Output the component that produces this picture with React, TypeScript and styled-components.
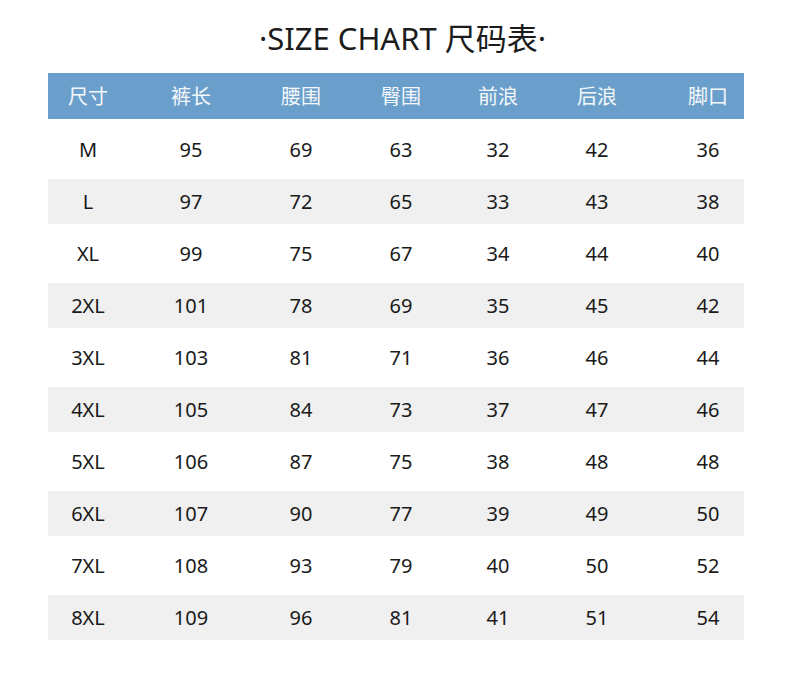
import React from 'react';
import styled, { createGlobalStyle } from 'styled-components';

const GlobalStyle = createGlobalStyle`
  body {
    margin: 0;
    background: #ffffff;
    font-family: "Noto Sans", "Noto Sans CJK SC", sans-serif;
  }
`;

const Page = styled.div`
  width: 790px;
  height: 676px;
  background: #ffffff;
  padding: 0 46px 0 48px;
  box-sizing: border-box;
`;

const Title = styled.h1`
  margin: 0;
  height: 73px;
  display: flex;
  align-items: center;
  justify-content: center;
  padding-left: 13px;
  font-size: 31px;
  font-weight: 400;
  color: #1c1c1c;
`;

const Table = styled.div`
  display: flex;
  flex-direction: column;
  gap: 7px;
  width: 696px;
`;

const COLS = '80px 126px 94px 106px 88px 110px 92px';

const HeadRow = styled.div`
  display: grid;
  grid-template-columns: ${COLS};
  height: 46px;
  margin-bottom: 1px;
  background: #6b9fcb;
  align-items: center;
`;

const Row = styled.div<{ $striped: boolean }>`
  display: grid;
  grid-template-columns: ${COLS};
  height: 45px;
  align-items: center;
  background: ${(p) => (p.$striped ? '#f0f0f0' : '#ffffff')};
`;

const HeadCell = styled.div<{ $last?: boolean }>`
  text-align: center;
  padding-left: ${(p) => (p.$last ? '20px' : '0')};
  font-size: 20px;
  color: #f4f8fc;
  font-family: "Noto Sans CJK SC", sans-serif;
  line-height: 1;
`;

const Cell = styled.div<{ $last?: boolean }>`
  text-align: center;
  padding-left: ${(p) => (p.$last ? '20px' : '0')};
  font-size: 20px;
  color: #1a1a1a;
  line-height: 1;
`;

const headers = ['尺寸', '裤长', '腰围', '臀围', '前浪', '后浪', '脚口'];

const rows = [
  ['M', '95', '69', '63', '32', '42', '36'],
  ['L', '97', '72', '65', '33', '43', '38'],
  ['XL', '99', '75', '67', '34', '44', '40'],
  ['2XL', '101', '78', '69', '35', '45', '42'],
  ['3XL', '103', '81', '71', '36', '46', '44'],
  ['4XL', '105', '84', '73', '37', '47', '46'],
  ['5XL', '106', '87', '75', '38', '48', '48'],
  ['6XL', '107', '90', '77', '39', '49', '50'],
  ['7XL', '108', '93', '79', '40', '50', '52'],
  ['8XL', '109', '96', '81', '41', '51', '54'],
];

const App: React.FC = () => {
  return (
    <Page>
      <GlobalStyle />
      <Title>·SIZE CHART 尺码表·</Title>
      <Table>
        <HeadRow>
          {headers.map((h, i) => (
            <HeadCell key={h} $last={i === headers.length - 1}>{h}</HeadCell>
          ))}
        </HeadRow>
        {rows.map((r, ri) => (
          <Row key={r[0]} $striped={ri % 2 === 1}>
            {r.map((v, i) => (
              <Cell key={i} $last={i === r.length - 1}>{v}</Cell>
            ))}
          </Row>
        ))}
      </Table>
    </Page>
  );
};

export default App;
